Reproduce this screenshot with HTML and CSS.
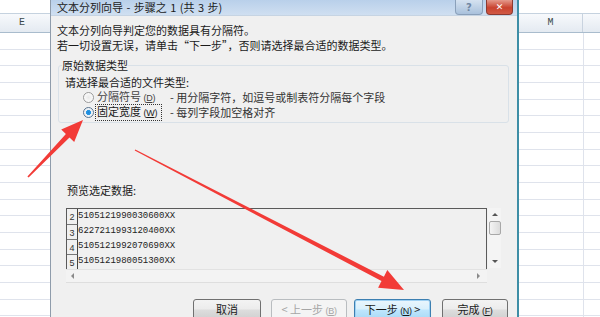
FILE: index.html
```html
<!DOCTYPE html>
<html lang="zh-CN">
<head>
<meta charset="utf-8">
<title>文本分列向导</title>
<link rel="stylesheet" href="styles.css">
</head>
<body>
<div class="screen">
  <div class="sheet sheet-left">
    <div class="sheet-top"></div>
    <div class="col-head"><span class="col-e">E</span></div>
    <div class="grid"></div>
  </div>

  <div class="dialog">
    <div class="titlebar">
      <span class="title">文本分列向导 - 步骤之 1 (共 3 步)</span>
      <div class="tb-buttons">
        <span class="tb-help">?</span>
        <span class="tb-close">✕</span>
      </div>
    </div>
    <div class="dlg-body">
      <p class="msg">文本分列向导判定您的数据具有分隔符。</p>
      <p class="msg">若一切设置无误，请单击“下一步”，否则请选择最合适的数据类型。</p>

      <fieldset class="group">
        <legend>原始数据类型</legend>
        <div class="group-inner">
          <div class="prompt">请选择最合适的文件类型:</div>
          <div class="radio-row">
            <span class="radio"></span>
            <span class="rlabel">分隔符号 <span class="key">(<u>D</u>)</span></span>
            <span class="desc">- 用分隔字符，如逗号或制表符分隔每个字段</span>
          </div>
          <div class="radio-row">
            <span class="radio checked"></span>
            <span class="rlabel focus">固定宽度 <span class="key">(<u>W</u>)</span></span>
            <span class="desc">- 每列字段加空格对齐</span>
          </div>
        </div>
      </fieldset>

      <div class="preview-label">预览选定数据:</div>

      <div class="preview-wrap">
        <div class="preview">
          <div class="pgrid">
            <div class="prow"><span class="pnum">2</span><span class="pdata">5105121990030600XX</span></div>
            <div class="prow"><span class="pnum">3</span><span class="pdata">6227211993120400XX</span></div>
            <div class="prow"><span class="pnum">4</span><span class="pdata">5105121992070690XX</span></div>
            <div class="prow"><span class="pnum">5</span><span class="pdata">5105121980051300XX</span></div>
          </div>
          <div class="hscroll">
            <span class="arr-left"></span>
            <span class="arr-right"></span>
          </div>
        </div>
        <div class="vscroll">
          <span class="arr-up"></span>
          <span class="thumb"></span>
          <span class="vspace"></span>
          <span class="arr-down"></span>
        </div>
      </div>

      <div class="buttons">
        <span class="btn btn-cancel">取消</span>
        <span class="btn btn-back disabled">&lt; 上一步 <span class="key">(<u>B</u>)</span></span>
        <span class="btn btn-next default">下一步 <span class="key">(<u>N</u>)</span> &gt;</span>
        <span class="btn btn-finish">完成 <span class="key">(<u>F</u>)</span></span>
      </div>
    </div>
  </div>

  <div class="sheet sheet-right">
    <div class="sheet-top"></div>
    <div class="col-head"><span class="col-m">M</span><span class="col-n"></span></div>
    <div class="grid grid-cols"></div>
  </div>

  <svg class="arrows" width="600" height="317" viewBox="0 0 600 317">
    <polygon fill="#f23b37" points="27.4,176.4 65.9,134.1 61.2,129.6 83,120 74.2,142 69.5,137.5 28.6,177.6"/>
    <polygon fill="#f23b37" points="135.3,149.5 383.9,276.7 387.3,270 404,290 378.1,287.8 381.5,281.1 134.7,150.5"/>
  </svg>
</div>
</body>
</html>
```

FILE: styles.css
```css
* { box-sizing: border-box; }

html, body {
  margin: 0;
  padding: 0;
  background: #ffffff;
}

body {
  font-family: "Noto Sans CJK SC", "Noto Sans", sans-serif;
  font-size: 11px;
  color: #1a1a1a;
}

.screen {
  position: relative;
  width: 600px;
  height: 317px;
  overflow: hidden;
  display: flex;
}

/* ---------- spreadsheet background ---------- */
.sheet {
  display: flex;
  flex-direction: column;
  background: #ffffff;
}
.sheet-left { width: 50px; }
.sheet-right { width: 81px; }

.sheet-top { height: 14px; background: #ffffff; border-bottom: 1px solid #c5d2df; }

.col-head {
  height: 19px;
  display: flex;
  background: linear-gradient(#f7f9fc, #e4eaf1);
  border-bottom: 1px solid #a9bccd;
  font-family: "Liberation Mono", monospace;
  font-size: 10px;
  line-height: 18px;
  color: #3b4a4a;
}
.col-e { padding-left: 19px; }
.col-m { width: 64px; text-align: center; border-right: 1px solid #c9d3df; }
.col-n { flex: 1; }

.grid {
  flex: 1;
  background: repeating-linear-gradient(to bottom, transparent 0, transparent 15.667px, #dfe3ec 15.667px, #dfe3ec 16.667px);
}
.grid-cols {
  background:
    linear-gradient(to right, transparent 0, transparent 64px, #dfe3ec 64px, #dfe3ec 65px, transparent 65px),
    repeating-linear-gradient(to bottom, transparent 0, transparent 15.667px, #dfe3ec 15.667px, #dfe3ec 16.667px);
}

/* ---------- dialog ---------- */
.dialog {
  width: 469px;
  display: flex;
  flex-direction: column;
  background: #f0f0f0;
  border-left: 1px solid #8f9cab;
  border-right: 2px solid #3e8ea6;
}

.titlebar {
  height: 17px;
  display: flex;
  align-items: flex-start;
  padding-left: 6px;
  background: linear-gradient(#b9d0ea, #cfdff1);
  border-bottom: 1px solid #c6d4e3;
}
.title {
  line-height: 15px;
  color: #1b1b1b;
  word-spacing: 1px;
}
.tb-buttons {
  margin-left: auto;
  margin-right: 4px;
  display: flex;
  gap: 3px;
}
.tb-help, .tb-close {
  height: 15px;
  border-radius: 0 0 4px 4px;
  display: flex;
  align-items: center;
  justify-content: center;
  font-family: "DejaVu Sans", sans-serif;
  font-weight: bold;
}
.tb-help {
  width: 28px;
  background: linear-gradient(#d5e2f0, #a9c1dc);
  border: 1px solid #8aa0ba;
  border-top: none;
  color: #7187a3;
  font-size: 10px;
}
.tb-close {
  width: 27px;
  background: linear-gradient(#e49a8c, #c9432f 55%, #d25a45);
  border: 1px solid #8c3a30;
  border-top: none;
  color: #ffffff;
  font-size: 9px;
}

.dlg-body {
  flex: 1;
  padding: 7px 0 0 6px;
}

.msg {
  margin: 0;
  line-height: 15px;
}

.group {
  margin: 5px 8px 0 1px;
  padding: 0 0 2px 3px;
  border: 1px solid #d9e1e8;
  border-radius: 3px;
  min-width: 0;
}
.group legend {
  padding: 0;
  line-height: 14px;
}
.group-inner { padding-left: 3px; }

.prompt {
  margin-top: 3px;
  line-height: 15px;
}
.radio-row {
  height: 15px;
  display: flex;
  align-items: center;
  padding-left: 18px;
  line-height: 13px;
  white-space: nowrap;
}
.radio {
  width: 11px;
  height: 11px;
  border-radius: 50%;
  border: 1px solid #9a9a9a;
  background: radial-gradient(circle, #e9e9e9 0, #fbfbfb 70%);
  margin-right: 1px;
  flex: none;
}
.radio.checked {
  border-color: #5a7590;
  background: radial-gradient(circle, #1c86d9 0, #2a9ae6 2.4px, #e8eef4 2.6px, #f8fafc 100%);
}
.rlabel {
  flex: none;
  width: 67px;
  padding: 0 1px;
  border: 1px dotted transparent;
  color: #444;
  white-space: nowrap;
}
.key {
  font-family: "Liberation Sans", sans-serif;
  font-size: 9px;
  letter-spacing: -0.3px;
}
.rlabel.focus {
  border-color: #333;
  color: #1a1a1a;
}
.desc {
  margin-left: 8px;
  color: #333;
}

.preview-label {
  margin: 60px 0 0 10px;
  line-height: 15px;
}

.preview-wrap {
  display: flex;
  margin: 10px 0 0 9px;
}
.preview {
  width: 421px;
  display: flex;
  flex-direction: column;
}
.pgrid {
  border-top: 1px solid #5a5a5a;
  border-left: 1px solid #5a5a5a;
  border-right: 1px solid #5a5a5a;
}
.prow {
  height: 15px;
  display: flex;
}
.pnum {
  width: 11px;
  border-right: 1px solid #444;
  border-top: 1px solid #777;
  font-family: "Liberation Sans", sans-serif;
  font-size: 9px;
  line-height: 16px;
  text-align: center;
  color: #333;
}
.prow:first-child .pnum { border-top: none; }
.pdata {
  font-family: "Liberation Mono", monospace;
  font-size: 9px;
  line-height: 15px;
  color: #222;
}
.hscroll {
  height: 14px;
  display: flex;
  align-items: center;
  justify-content: space-between;
  padding: 0 7px 0 5px;
  background: #f3f3f3;
  border-top: 1px solid #e2e2e2;
  border-bottom: 1px solid #dedede;
}
.arr-left, .arr-right, .arr-up, .arr-down {
  width: 0;
  height: 0;
  border: 3px solid transparent;
}
.arr-left { border-right-color: #8a8a8a; border-left-width: 0; }
.arr-right { border-left-color: #8a8a8a; border-right-width: 0; }

.vscroll {
  width: 13px;
  margin-left: 1px;
  display: flex;
  flex-direction: column;
  align-items: center;
  padding: 5px 0 5px;
  background: #f4f4f4;
  height: 60px;
}
.arr-up { border-bottom-color: #555; border-top-width: 0; }
.arr-down { border-top-color: #555; border-bottom-width: 0; }
.thumb {
  margin-top: 5px;
  width: 12px;
  height: 14px;
  border: 1px solid #a8a8a8;
  border-radius: 2px;
  background: linear-gradient(to right, #f4f4f4, #dcdcdc);
}
.vspace { flex: 1; }

.buttons {
  display: flex;
  margin: 16px 0 0 136px;
}
.btn {
  height: 22px;
  line-height: 18px;
  text-align: center;
  border: 1px solid #707070;
  border-radius: 3px;
  background: linear-gradient(#f3f3f3, #ececec 45%, #dddddd 50%, #cfcfcf);
  color: #1a1a1a;
  flex: none;
  white-space: nowrap;
}
.btn-cancel { width: 68px; }
.btn-back { width: 76px; margin-left: 10px; }
.btn-next { width: 77px; margin-left: 7px; }
.btn-finish { width: 66px; margin-left: 11px; }
.btn.disabled {
  border-color: #b9bdc0;
  background: #f4f4f4;
  color: #a6a6a6;
}
.btn.default {
  border-color: #3c7fb1;
  box-shadow: inset 0 0 0 1px #9fd1f3;
  background: linear-gradient(#eaf6fd, #d9f0fc 45%, #bee6fd 50%, #a7d9f5);
}

.arrows {
  position: absolute;
  left: 0;
  top: 0;
  pointer-events: none;
}
```
